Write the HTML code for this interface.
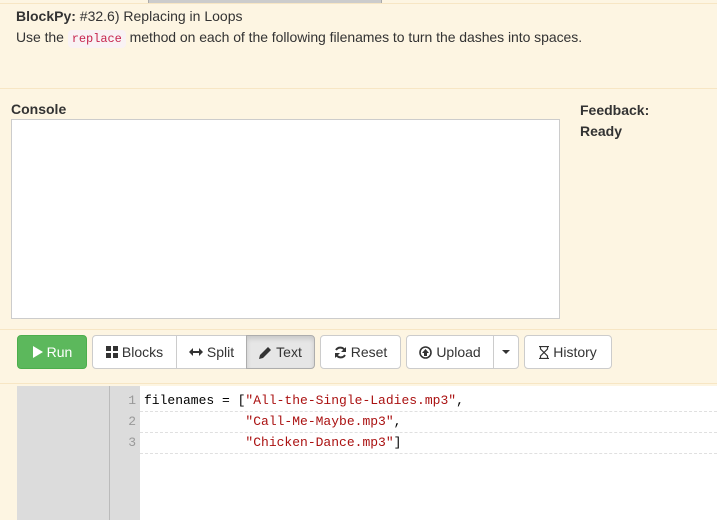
<!DOCTYPE html>
<html><head><style>
*{box-sizing:border-box;margin:0;padding:0}
body{width:717px;height:520px;overflow:hidden;background:#fdf5e2;font-family:"Liberation Sans",sans-serif;font-size:14px;color:#333;position:relative}
.abs{position:absolute}
.btn{position:absolute;top:335px;height:34px;border:1px solid #ccc;background:#fff;border-radius:4px;font-size:14px;color:#333;display:flex;align-items:center;justify-content:center;gap:4px}
.code{font-family:"Liberation Mono",monospace;font-size:13px}
.ln{position:absolute;left:110px;width:26px;text-align:right;color:#999;font-family:"Liberation Mono",monospace;font-size:13px}
.cl{position:absolute;left:144px;white-space:pre;font-family:"Liberation Mono",monospace;font-size:13px;color:#000}
.s{color:#a11}
.dash{position:absolute;left:140px;right:0;border-top:1px dashed #e0e0e0}
</style></head><body>
<div class="abs" style="left:148px;top:0;width:234px;height:4px;background:#ccc;border:1px solid #aaa;border-top:0"></div>
<div class="abs" style="left:0;top:0;width:717px;height:4px;border-bottom:1px solid #f7e6c4;pointer-events:none"></div>
<div class="abs" style="left:16px;top:8px;font-size:14px"><b>BlockPy:</b> #32.6) Replacing in Loops</div>
<div class="abs" style="left:16px;top:29px;font-size:14px;letter-spacing:-0.05px">Use the <span class="code" style="color:#c7254e;background:#f9f2f4;padding:2px 4px;border-radius:4px;font-size:12px">replace</span> method on each of the following filenames to turn the dashes into spaces.</div>
<div class="abs" style="left:0;top:88px;width:717px;border-top:1px solid #f7e6c4"></div>
<div class="abs" style="left:11px;top:101px;font-weight:bold">Console</div>
<div class="abs" style="left:11px;top:119px;width:549px;height:200px;background:#fff;border:1px solid #ccc"></div>
<div class="abs" style="left:580px;top:100px;font-weight:bold;line-height:21px">Feedback:<br>Ready</div>
<div class="abs" style="left:0;top:329px;width:717px;border-top:1px solid #f7e6c4"></div>
<div class="btn" style="left:17px;width:70px;background:#5cb85c;border-color:#4cae4c;color:#fff"><svg width="11" height="12"><path d="M1 0L11 6L1 12Z" fill="#fff"/></svg>Run</div>
<div class="btn" style="left:92px;width:85px;border-radius:4px 0 0 4px"><svg width="12" height="12"><rect x="0" y="0" width="5" height="5" fill="#333"/><rect x="7" y="0" width="5" height="5" fill="#333"/><rect x="0" y="7" width="5" height="5" fill="#333"/><rect x="7" y="7" width="5" height="5" fill="#333"/></svg>Blocks</div>
<div class="btn" style="left:176px;width:71px;border-radius:0"><svg width="14" height="8"><path d="M0 4L4 0V3H10V0L14 4L10 8V5H4V8Z" fill="#333"/></svg>Split</div>
<div class="btn" style="left:246px;width:69px;border-radius:0 4px 4px 0;background:#e6e6e6;border-color:#adadad;box-shadow:inset 0 3px 5px rgba(0,0,0,.125)"><svg width="13" height="13"><path d="M0 13L1 9L9 1L12 4L4 12Z" fill="#333"/></svg>Text</div>
<div class="btn" style="left:320px;width:81px"><svg width="13" height="13" viewBox="0 0 13 13"><path d="M11 5A5 5 0 0 0 2 4M2 8A5 5 0 0 0 11 9" stroke="#333" stroke-width="2" fill="none"/><path d="M12 1V6H7Z M1 12V7H6Z" fill="#333"/></svg>Reset</div>
<div class="btn" style="left:406px;width:88px;border-radius:4px 0 0 4px"><svg width="13" height="13"><circle cx="6.5" cy="6.5" r="5.5" stroke="#333" stroke-width="1.6" fill="none"/><path d="M6.5 3L10 7H8V10H5V7H3Z" fill="#333"/></svg>Upload</div>
<div class="btn" style="left:493px;width:26px;border-radius:0 4px 4px 0"><svg width="8" height="4"><path d="M0 0H8L4 4Z" fill="#333"/></svg></div>
<div class="btn" style="left:524px;width:88px"><svg width="10" height="13"><path d="M0 0.5H10M0 12.5H10M1.5 1V3L5 6.5L8.5 3V1M1.5 12V10L5 6.5L8.5 10V12" stroke="#333" stroke-width="1.2" fill="none"/></svg>History</div>
<div class="abs" style="left:0;top:383px;width:717px;border-top:1px solid #f7e6c4"></div>
<div class="abs" style="left:17px;top:386px;width:123px;height:134px;background:#dcdcdc"></div>
<div class="abs" style="left:109px;top:386px;width:1px;height:134px;background:#bbb"></div>
<div class="abs" style="left:140px;top:386px;width:577px;height:134px;background:#fff"></div>
<div class="ln" style="top:393px">1</div>
<div class="ln" style="top:414px">2</div>
<div class="ln" style="top:435px">3</div>
<div class="cl" style="top:393px">filenames = [<span class="s">"All-the-Single-Ladies.mp3"</span>,</div>
<div class="cl" style="top:414px">             <span class="s">"Call-Me-Maybe.mp3"</span>,</div>
<div class="cl" style="top:435px">             <span class="s">"Chicken-Dance.mp3"</span>]</div>
<div class="dash" style="top:411px"></div>
<div class="dash" style="top:432px"></div>
<div class="dash" style="top:453px"></div>
</body></html>
